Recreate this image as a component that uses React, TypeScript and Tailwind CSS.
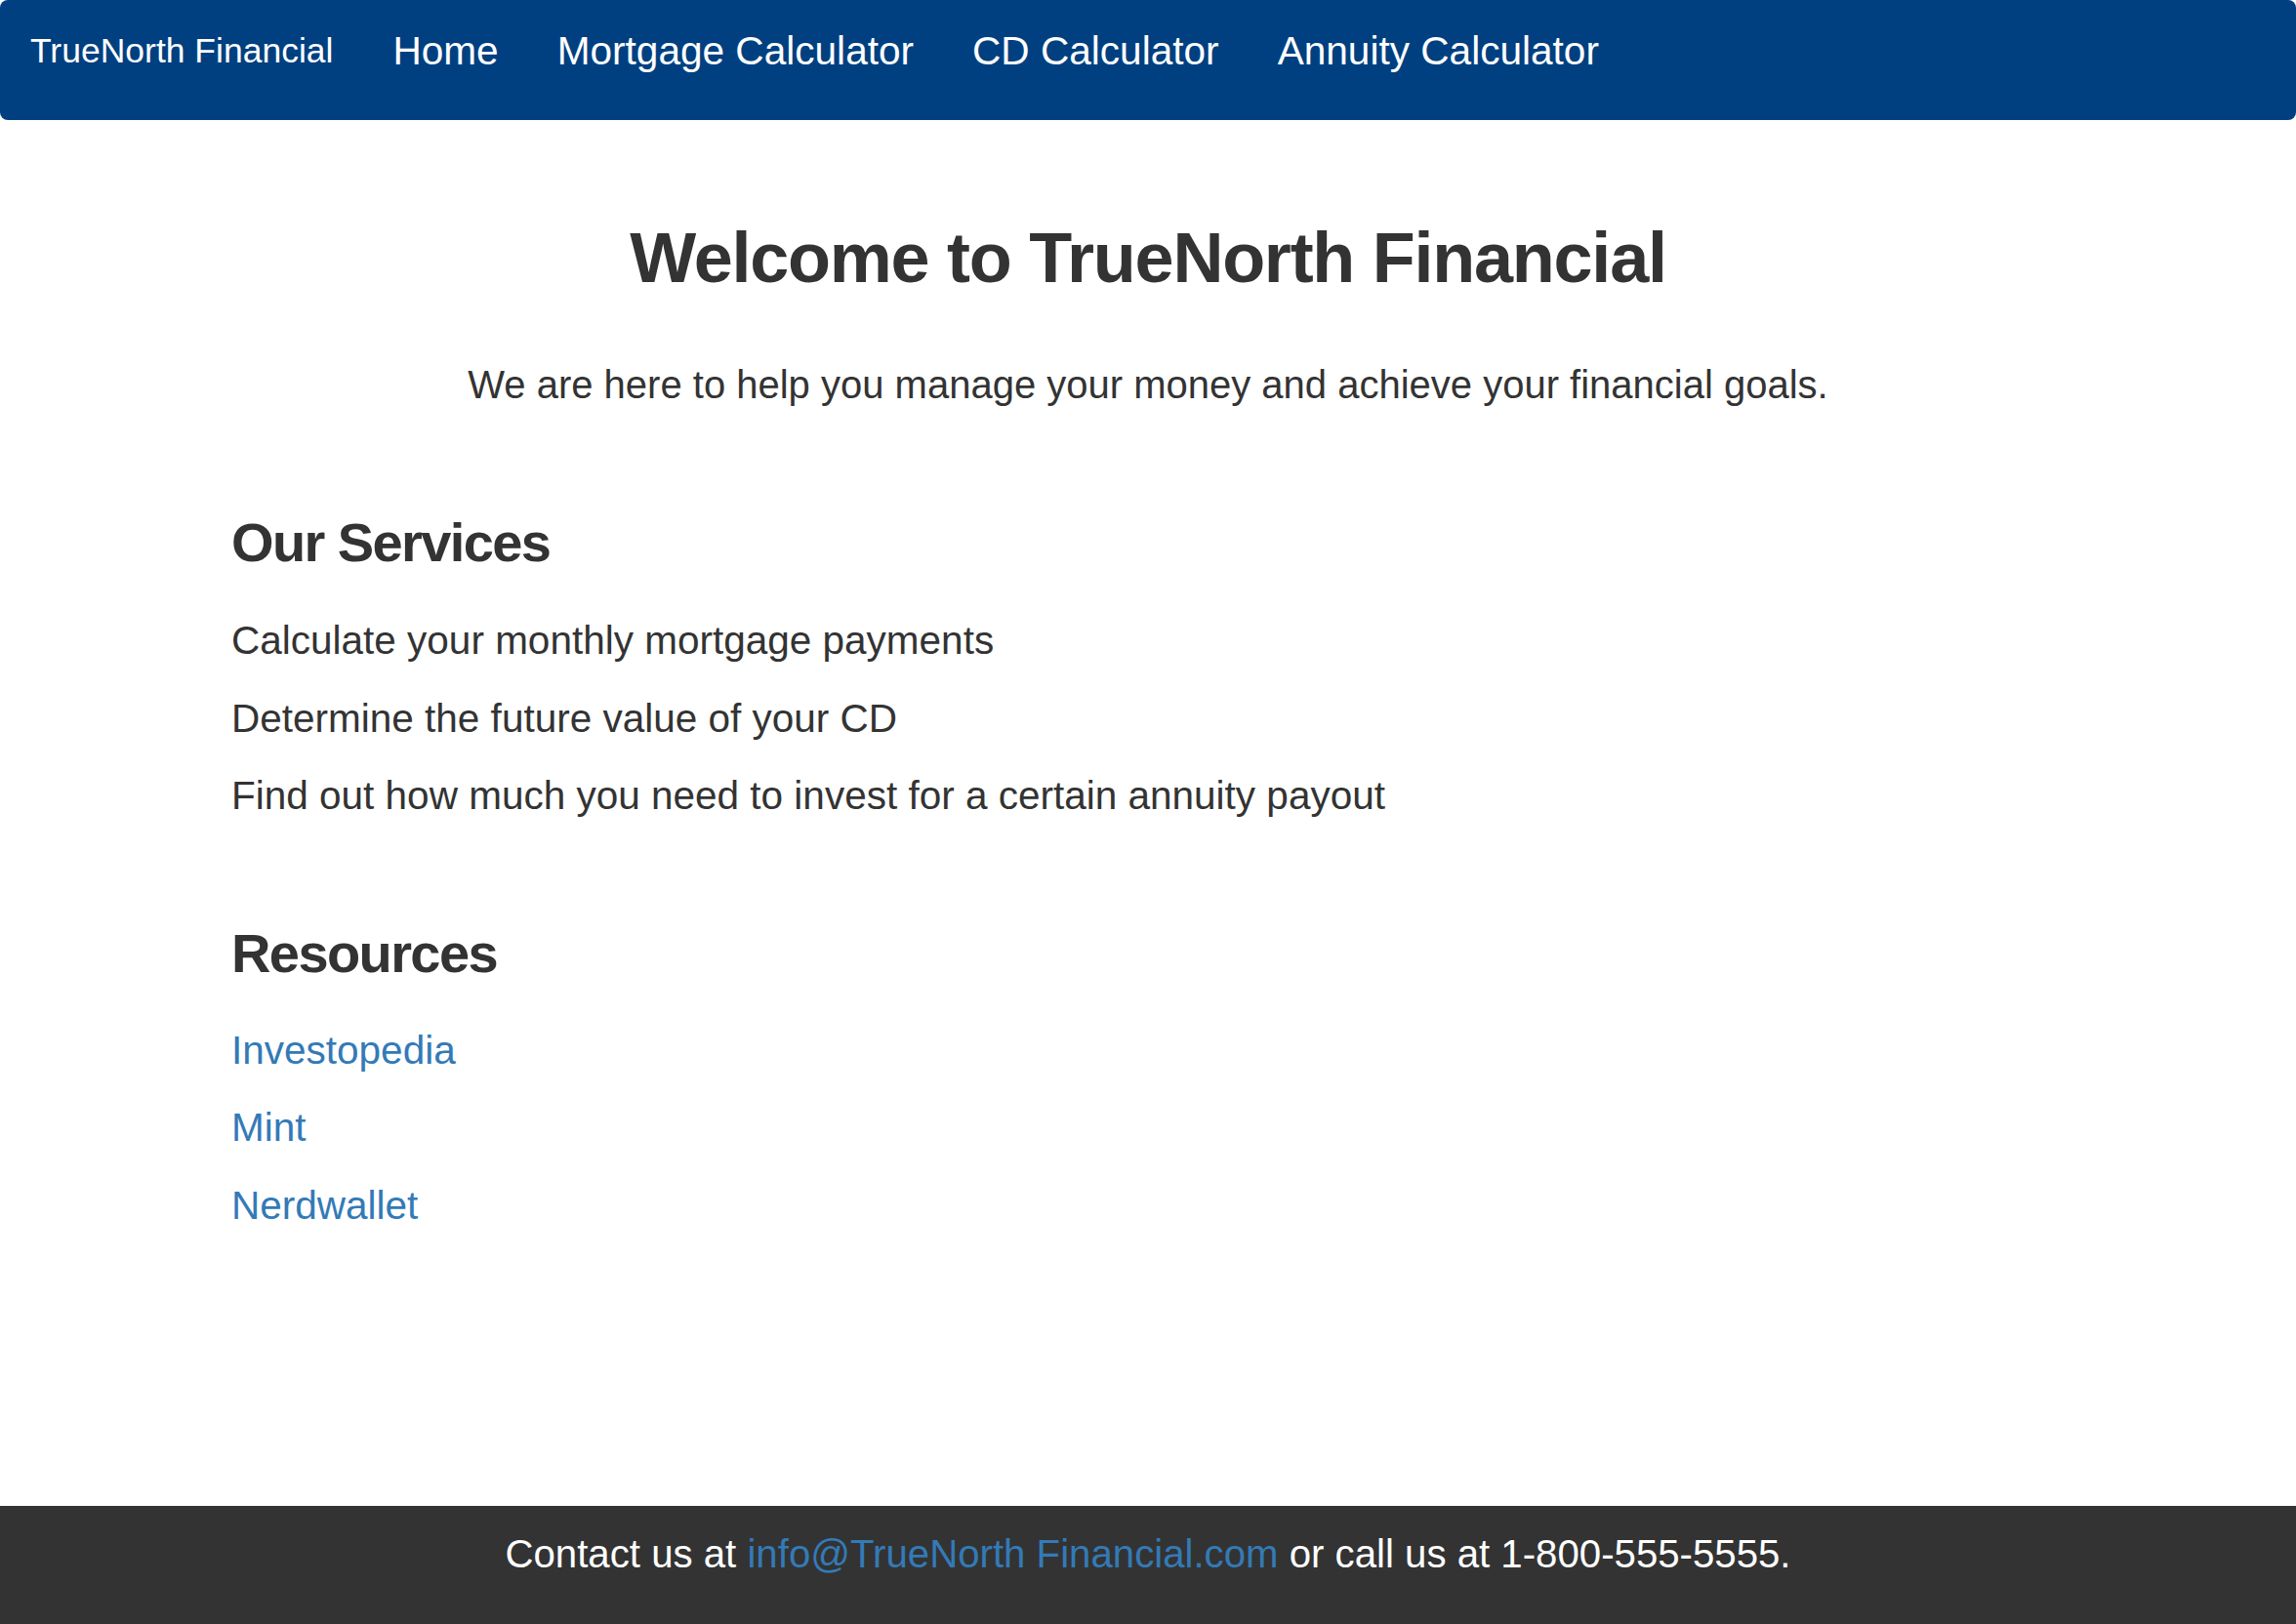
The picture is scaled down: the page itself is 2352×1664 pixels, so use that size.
const navLinks = ["Home", "Mortgage Calculator", "CD Calculator", "Annuity Calculator"];

const services = [
  "Calculate your monthly mortgage payments",
  "Determine the future value of your CD",
  "Find out how much you need to invest for a certain annuity payout",
];

const resources = ["Investopedia", "Mint", "Nerdwallet"];

export default function App() {
  return (
    <div className="min-h-screen flex flex-col bg-white text-[#333333] font-['Liberation_Sans',Arial,sans-serif]">
      <nav className="h-[123px] bg-[#004080] rounded-lg flex items-start pt-[24px] px-[31px] text-white">
        <a href="#" className="text-[35.5px] leading-[57px] mr-[61px]">
          TrueNorth Financial
        </a>
        <ul className="flex gap-[60px]">
          {navLinks.map((link) => (
            <li key={link}>
              <a href="#" className="text-[40.6px] leading-[57px]">
                {link}
              </a>
            </li>
          ))}
        </ul>
      </nav>

      <main className="flex-1 flex flex-col">
        <div className="text-center pt-[101px]">
          <h1 className="text-[72px] leading-[80px] font-bold tracking-[-1.25px]">
            Welcome to TrueNorth Financial
          </h1>
          <p className="text-[40px] leading-[57px] mt-[61.5px]">
            We are here to help you manage your money and achieve your financial goals.
          </p>
        </div>

        <section className="px-[237px] mt-[101px]">
          <h2 className="text-[56px] leading-[64px] font-bold tracking-[-1.6px]">Our Services</h2>
          <div className="mt-[40.5px] flex flex-col gap-[22.5px]">
            {services.map((s) => (
              <p key={s} className="text-[40.5px] leading-[57px]">
                {s}
              </p>
            ))}
          </div>
        </section>

        <section className="px-[237px] mt-[100.5px]">
          <h2 className="text-[56px] leading-[64px] font-bold tracking-[-1.6px]">Resources</h2>
          <div className="mt-[39px] flex flex-col gap-[22.5px]">
            {resources.map((r) => (
              <a key={r} href="#" className="text-[40.5px] leading-[57px] text-[#337ab7] self-start">
                {r}
              </a>
            ))}
          </div>
        </section>
      </main>

      <footer className="h-[121px] bg-[#333333] text-white text-center pt-[21px]">
        <p className="text-[40.2px] leading-[57px]">
          Contact us at{" "}
          <a href="#" className="text-[#337ab7]">
            info@TrueNorth Financial.com
          </a>{" "}
          or call us at 1-800-555-5555.
        </p>
      </footer>
    </div>
  );
}
